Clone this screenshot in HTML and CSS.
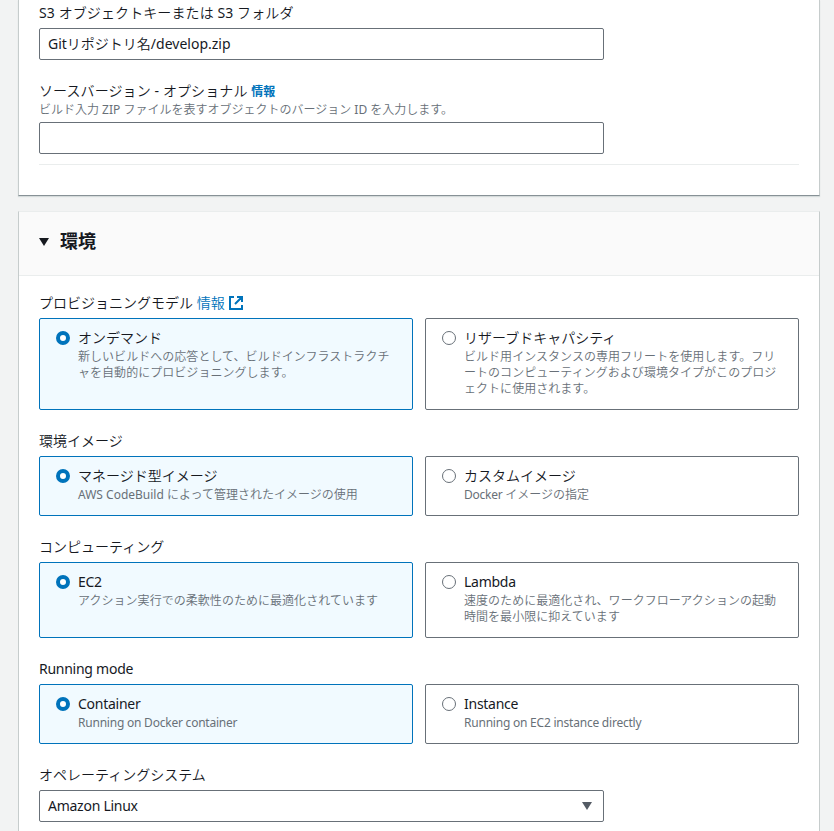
FILE: index.html
```html
<!DOCTYPE html>
<html lang="ja">
<head>
<meta charset="utf-8">
<title>CodeBuild</title>
<link rel="stylesheet" href="styles.css">
</head>
<body>
<main class="page">
  <section class="panel panel-source">
    <div class="field">
      <div class="label loose">S3 オブジェクトキーまたは S3 フォルダ</div>
      <div class="control">Gitリポジトリ名/develop.zip</div>
    </div>
    <div class="field">
      <div class="label"><span class="loose">ソースバージョン - オプショナル </span><a class="info-small">情報</a></div>
      <div class="hint">ビルド入力 ZIP ファイルを表すオブジェクトのバージョン ID を入力します。</div>
      <div class="control"></div>
    </div>
    <hr class="divider">
  </section>

  <section class="panel panel-env">
    <header class="panel-header">
      <svg class="caret" width="10" height="8" viewBox="0 0 10 8"><path d="M0 0h10L5 8z" fill="#16191f"/></svg>
      <h2>環境</h2>
    </header>
    <div class="panel-body">
      <div class="field">
        <div class="label">プロビジョニングモデル <a class="info">情報</a><svg class="external" width="14" height="14" viewBox="0 0 14 14" fill="none" stroke="#0073bb" stroke-width="2"><path d="M5 1H1v12h12V9M8 1h5v5M13 1L6 8"/></svg></div>
        <div class="cards">
          <div class="card selected"><i class="radio"></i><div><div class="title">オンデマンド</div><div class="desc kana">新しいビルドへの応答として、ビルドインフラストラクチ<br>ャを自動的にプロビジョニングします。</div></div></div>
          <div class="card"><i class="radio"></i><div><div class="title">リザーブドキャパシティ</div><div class="desc kana">ビルド用インスタンスの専用フリートを使用します。フリ<br>ートのコンピューティングおよび環境タイプがこのプロジ<br>ェクトに使用されます。</div></div></div>
        </div>
      </div>
      <div class="field">
        <div class="label">環境イメージ</div>
        <div class="cards">
          <div class="card selected"><i class="radio"></i><div><div class="title">マネージド型イメージ</div><div class="desc">AWS CodeBuild によって管理されたイメージの使用</div></div></div>
          <div class="card"><i class="radio"></i><div><div class="title">カスタムイメージ</div><div class="desc"><span class="latin">Docker </span>イメージの指定</div></div></div>
        </div>
      </div>
      <div class="field">
        <div class="label">コンピューティング</div>
        <div class="cards">
          <div class="card selected"><i class="radio"></i><div><div class="title latin">EC2</div><div class="desc kana">アクション実行での柔軟性のために最適化されています</div></div></div>
          <div class="card"><i class="radio"></i><div><div class="title latin">Lambda</div><div class="desc kana">速度のために最適化され、ワークフローアクションの起動<br>時間を最小限に抑えています</div></div></div>
        </div>
      </div>
      <div class="field">
        <div class="label latin">Running mode</div>
        <div class="cards">
          <div class="card selected"><i class="radio"></i><div><div class="title latin">Container</div><div class="desc latin">Running on Docker container</div></div></div>
          <div class="card"><i class="radio"></i><div><div class="title latin">Instance</div><div class="desc latin">Running on EC2 instance directly</div></div></div>
        </div>
      </div>
      <div class="field">
        <div class="label">オペレーティングシステム</div>
        <div class="control select latin">Amazon Linux<svg width="10" height="8" viewBox="0 0 10 8"><path d="M0 0h10L5 8z" fill="#545b64"/></svg></div>
      </div>
    </div>
  </section>
</main>
</body>
</html>
```
FILE: styles.css
```css
* { box-sizing: border-box; }
html, body { margin: 0; height: 831px; overflow: hidden; }
body {
  background: #f2f3f3;
  color: #16191f;
  font: 14px/22px "Noto Sans", "Noto Sans CJK JP DemiLight", "Noto Sans CJK JP", sans-serif;
}
.page {
  display: flex;
  flex-direction: column;
  gap: 15px;
  padding: 0 14px 0 18px;
}
.panel {
  background: #fff;
  border-left: 1px solid #c6cccc;
  border-right: 1px solid #c6cccc;
  flex: none;
}
.panel-source {
  height: 196px;
  padding: 2px 20px 0;
  border-bottom: 1px solid #879196;
  box-shadow: 0 1px 1px #d5dbdb;
}
.panel-env { height: 640px; border-top: 1px solid #eaeded; }
.panel-header {
  display: flex;
  align-items: center;
  gap: 11px;
  height: 64px;
  padding: 0 20px 4px;
  background: #fafafa;
  border-bottom: 1px solid #eaeded;
}
h2 { margin: -2px 0 0; font: 700 18px/22px "Noto Sans", "Noto Sans CJK JP", sans-serif; }
.panel-body { padding: 16px 20px 0; }
.field { margin-bottom: 20px; }
.label { height: 22px; margin-bottom: 4px; white-space: nowrap; }
.hint, .desc { color: #687078; font-size: 12px; line-height: 16px; white-space: nowrap; }
.label:has(+ .hint) { margin-bottom: 0; }
.hint { margin-bottom: 4px; }
.latin { letter-spacing: -0.26px; }
.desc.latin { letter-spacing: -0.22px; }
.loose { letter-spacing: 0.1px; }
.kana { letter-spacing: 0.04px; }
a { color: #0073bb; }
.info-small { font-family: "Noto Sans", "Noto Sans CJK JP", sans-serif; font-size: 12px; font-weight: 700; }
.external { margin-left: 4px; vertical-align: -2px; }
.control {
  display: flex;
  align-items: center;
  justify-content: space-between;
  width: 565px;
  height: 32px;
  padding: 0 8px;
  border: 1px solid #687078;
  border-radius: 2px;
  background: #fff;
}
.select { padding-right: 11px; }
.divider { margin: -10px 0 0; border: 0; border-top: 1px solid #eaeded; }
.cards { display: grid; grid-template-columns: 1fr 1fr; gap: 12px; }
.card {
  display: flex;
  gap: 8px;
  padding: 8px 16px 12px;
  border: 1px solid #687078;
  border-radius: 2px;
}
.selected { border-color: #0073bb; background: #f1faff; }
.radio {
  flex: none;
  width: 14px;
  height: 14px;
  margin-top: 4px;
  border: 1px solid #687078;
  border-radius: 50%;
  background: #fff;
}
.selected .radio { border: 4px solid #0073bb; }
.title { height: 22px; line-height: 22px; white-space: nowrap; }
```
